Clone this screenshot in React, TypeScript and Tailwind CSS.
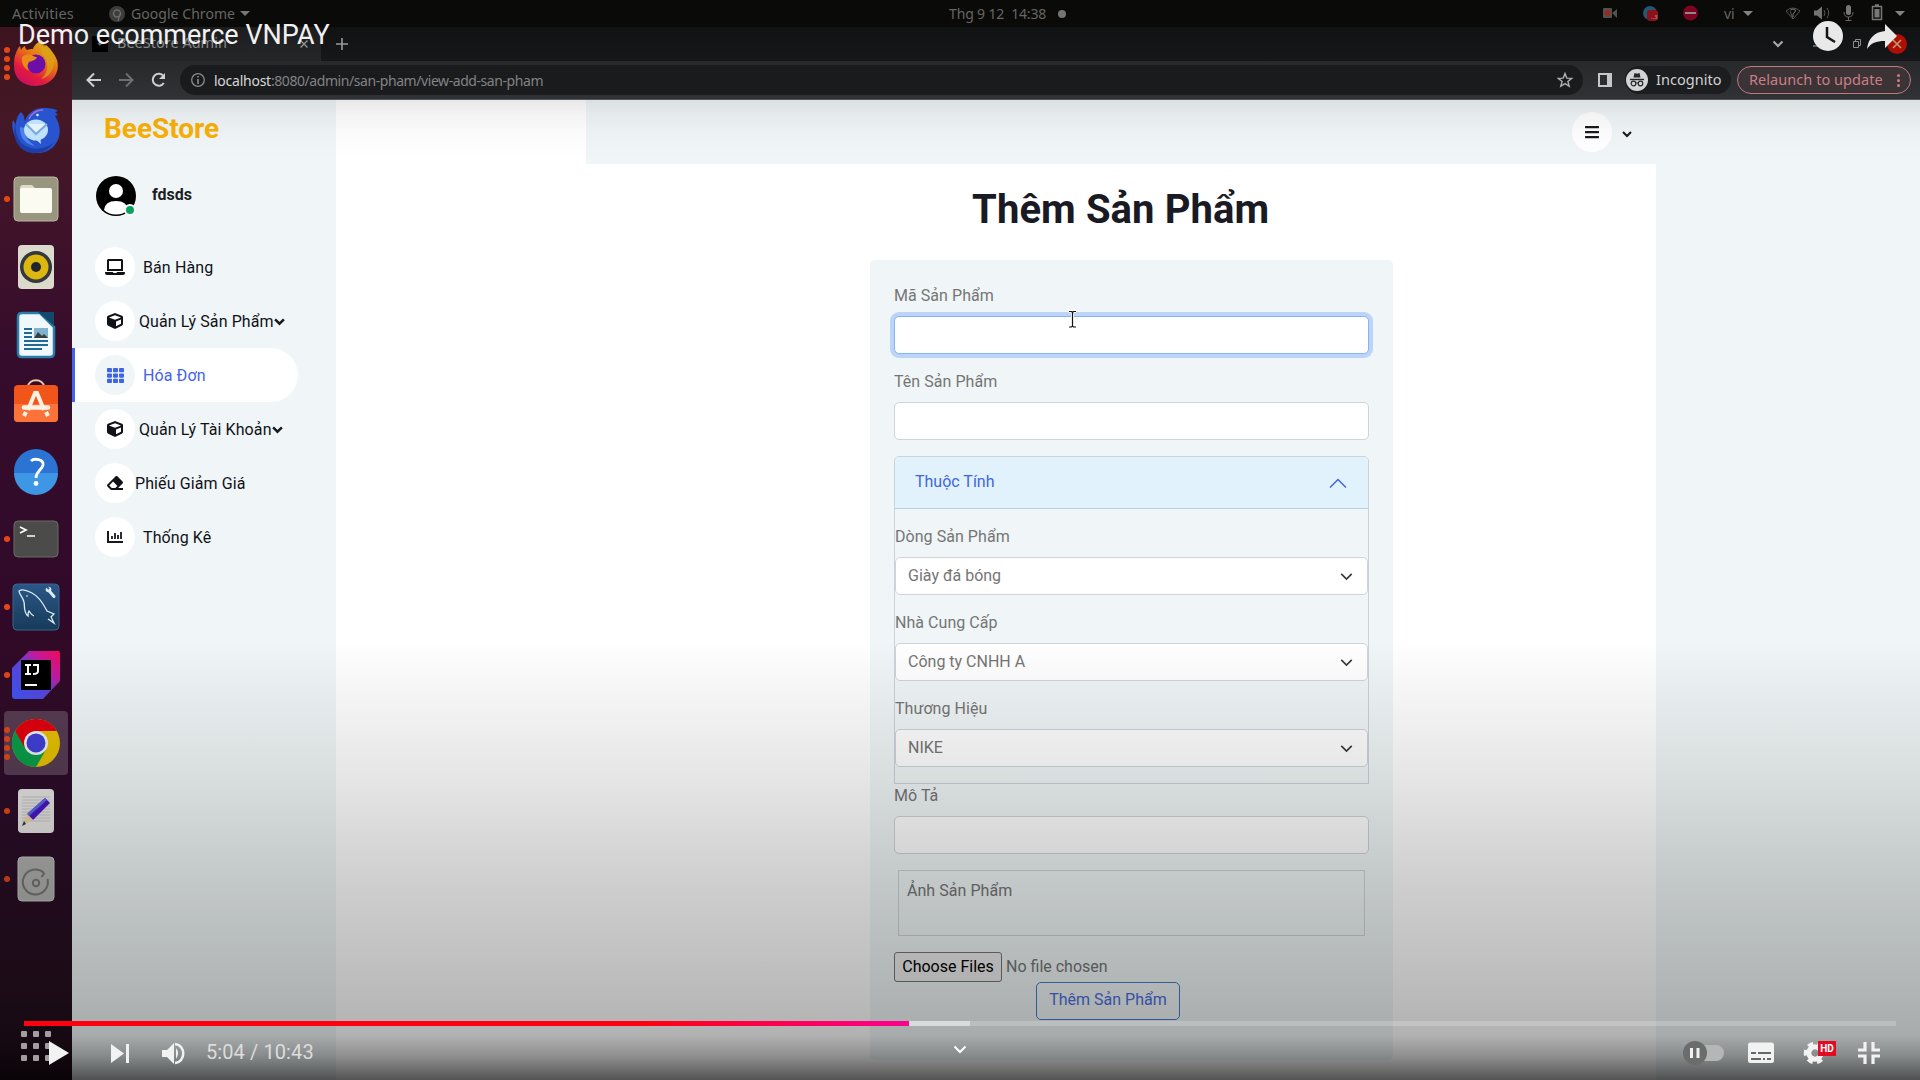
import React from "react";
import { FaLaptop, FaCube, FaTh, FaEraser, FaBars } from "react-icons/fa";

const ubuntu = "font-['Noto_Sans',sans-serif]";

function Dots({ n }: { n: number }) {
  return (
    <div className="absolute left-1 top-0 flex h-full w-[6px] flex-col justify-center gap-[3px]">
      {Array.from({ length: n }).map((_, i) => (
        <span key={i} className="h-[6px] w-[6px] rounded-full bg-[#e34716]" />
      ))}
    </div>
  );
}

const dock: { n: number; on?: boolean; art: React.ReactNode }[] = [
  {
    n: 4,
    art: (
      <>
        <defs>
          <linearGradient id="fx" x1="0.85" y1="0" x2="0.25" y2="1">
            <stop offset="0" stopColor="#d8c41c" />
            <stop offset=".4" stopColor="#e87a12" />
            <stop offset=".75" stopColor="#e3193f" />
            <stop offset="1" stopColor="#c70f63" />
          </linearGradient>
        </defs>
        <path d="M4 14c1-3 2-5 4-7l1 4c1-2 2-3 4-4 0 2 1 3 2 4 2-1 4-1 6-1 1-4 5-7 9-9-1 3 0 5 2 7l2-2c5 4 9 10 11 15 4 14-7 26-21 26C10 47 2 39 2 27c0-5 0-9 2-13z" fill="url(#fx)" />
        <circle cx="24" cy="25" r="9.500" fill="#6b0fa8" />
        <path d="M10 18c4-3 8-3 11-1 2 1 3 1 4 1-1 3-5 4-8 5-2 3-2 6 1 9-6-2-9-8-8-14z" fill="#ec8a17" />
        <path d="M29 3c4 3 11 8 14 18-2 14-9 18-14 19 6-5 8-12 5-19-2-4-7-9-5-18z" fill="#dca31a" opacity=".75" />
      </>
    ),
  },
  {
    n: 0,
    art: (
      <>
        <path d="M9 5c4 4 3 7 4 9C15 8 20 2 30 1c6 0 12 0 16 3l-3 1 3 3-3 1c6 9 7 21-1 30-9 10-25 9-33-1C1 30-1 19 1 13l3 5c0-6 2-10 5-13z" fill="#2855cf" />
        <path d="M4 15c-2 12 3 23 15 26 9 2 18-1 23-6-5 9-14 12-23 11C5 43-1 29 4 15z" fill="#1c3ea6" />
        <path d="M8 20c-1 10 6 18 15 19-7-5-11-11-10-18z" fill="#4c82ea" />
        <ellipse cx="24" cy="23" rx="12" ry="10.500" fill="#bfe1fb" />
        <path d="M14 17l10 10 11-10" stroke="#7aa9da" strokeWidth="2" fill="#e4f3fe" />
        <path d="M22 31l7 6-1-8z" fill="#bfe1fb" />
        <circle cx="25.500" cy="8" r="1.300" fill="#d9f4ff" />
        <path d="M17 12c3-6 8-9 14-9" stroke="#a06bd8" strokeWidth="1.500" fill="none" />
      </>
    ),
  },
  {
    n: 1,
    art: (
      <>
        <rect x="2" y="2" width="44" height="44" rx="4" fill="#98967f" stroke="#b9b7a3" />
        <path d="M8 13q0-3 3-3h9l3 3h13v8H8z" fill="#dddccb" />
        <rect x="8" y="13" width="32" height="25" rx="2" fill="#fbfbf1" />
      </>
    ),
  },
  {
    n: 0,
    art: (
      <>
        <rect x="6" y="2" width="36" height="44" rx="4" fill="#dcd9cd" />
        <circle cx="24" cy="24" r="16" fill="#34393d" />
        <circle cx="24" cy="24" r="12.500" fill="#dcb70f" />
        <circle cx="24" cy="24" r="5" fill="#22262a" />
      </>
    ),
  },
  {
    n: 0,
    art: (
      <>
        <path d="M10 2h18l14 14v26q0 4-4 4H10q-4 0-4-4V6q0-4 4-4z" fill="#f1f8fc" stroke="#2a7fa8" strokeWidth="2.500" />
        <path d="M26 1h16v14z" fill="#134a6b" />
        <path d="M12 18h8M12 22h8M12 26h8M12 30h24M12 34h24M12 38h18" stroke="#1f6b96" strokeWidth="1.800" />
        <rect x="22" y="17" width="14" height="10" fill="#7fb3d0" />
        <path d="M22 27l4-6 4 4 2-2 4 4z" fill="#36413b" />
      </>
    ),
  },
  {
    n: 0,
    art: (
      <>
        <path d="M16 8c0-9 16-9 16 0" fill="none" stroke="#e8cfa8" strokeWidth="2" />
        <rect x="2" y="6" width="44" height="37" rx="4" fill="#f2551a" />
        <path d="M2 25h44v14q0 4-4 4H6q-4 0-4-4z" fill="#fb7338" />
        <path d="M16 31L23 14h2l7 17M14 33l-2 4M34 33l2 4" stroke="#fdf1e4" strokeWidth="4" fill="none" />
        <path d="M12 28.500h24" stroke="#fdf1e4" strokeWidth="4.500" strokeLinecap="round" />
      </>
    ),
  },
  {
    n: 0,
    art: (
      <>
        <circle cx="24" cy="24" r="22" fill="#2c74d4" />
        <path d="M2 26a22 22 0 0 0 44 0z" fill="#3d97e4" />
        <path d="M19 14c3-3 13-2 12 4-1 5-7 6-7 13" stroke="#fff" strokeWidth="2.800" fill="none" />
        <circle cx="24" cy="36.500" r="2.400" fill="#fff" />
      </>
    ),
  },
  {
    n: 1,
    art: (
      <>
        <rect x="2" y="6" width="44" height="36" rx="4" fill="#4b4c4a" stroke="#6b6a68" />
        <path d="M8 12l6 3-6 3M15 21h8" stroke="#fff" strokeWidth="1.700" fill="none" />
      </>
    ),
  },
  {
    n: 1,
    art: (
      <>
        <defs>
          <linearGradient id="my" x1="0" y1="0" x2="0" y2="1">
            <stop offset="0" stopColor="#2b5688" />
            <stop offset="1" stopColor="#173b58" />
          </linearGradient>
        </defs>
        <rect x="1" y="1" width="46" height="46" rx="4" fill="url(#my)" stroke="#38648d" />
        <path d="M22 33c-3-1-4-4-5-5-1 1-1 3-1 5-5-4-3-10-4-14-1-5-5-8-5-11 4-3 9 0 13 2 8 4 12 12 15 18l7 3-3 3 3 6-6-4" fill="none" stroke="#dcecf4" strokeWidth="1.300" />
        <path d="M36 6.500l6 7" stroke="#dcecf4" strokeWidth="3" strokeLinecap="round" />
        <circle cx="36.500" cy="6.500" r="2.800" fill="#dcecf4" />
        <path d="M34 3l3 3" stroke="#2b5688" strokeWidth="2" />
        <circle cx="15" cy="13" r=".8" fill="#fff" />
      </>
    ),
  },
  {
    n: 1,
    art: (
      <>
        <defs>
          <linearGradient id="ij" x1="0" y1="1" x2="1" y2="0">
            <stop offset="0" stopColor="#3c55f5" />
            <stop offset=".45" stopColor="#5a45dd" />
            <stop offset=".7" stopColor="#c31aa0" />
            <stop offset="1" stopColor="#f5085a" />
          </linearGradient>
        </defs>
        <path d="M17 0h29q2 0 2 2v28L31 48H3q-3 0-3-3V17z" fill="url(#ij)" />
        <rect x="9" y="9" width="30" height="30" fill="#000" />
        <path d="M13 14h6M13 23h6M16 14v9M21 14h5v6q0 3-5 3" stroke="#fff" strokeWidth="2" fill="none" />
        <path d="M13 34h12" stroke="#fff" strokeWidth="2" />
      </>
    ),
  },
  {
    n: 4,
    on: true,
    art: (
      <>
        <circle cx="24" cy="24" r="24" fill="#e5c000" />
        <path d="M3.200 12A24 24 0 0 0 24 48L34.400 30 24 24z" fill="#0a9d48" />
        <path d="M3.200 12A24 24 0 0 1 44.800 12H24v12L13.600 30z" fill="#e3000f" />
        <circle cx="24" cy="24" r="12" fill="#eef0f3" />
        <circle cx="24" cy="24" r="9.500" fill="#4040d6" />
      </>
    ),
  },
  {
    n: 1,
    art: (
      <>
        <rect x="6" y="2" width="36" height="44" rx="4" fill="#e5e4e2" />
        <path d="M10 10h28M10 13h28M10 16h28M10 19h28M10 22h28M10 25h28M10 28h28M10 31h28M10 34h28" stroke="#c3c4c5" />
        <path d="M33 11l5 5-17 17-6-6z" fill="#4a16c4" />
        <path d="M33 11l-18 16 2 2 18-16z" fill="#5a6ae0" />
        <path d="M15 27l6 6-10 5z" fill="#ecd0a6" />
        <path d="M12 34l2 3-4 2z" fill="#333" />
      </>
    ),
  },
  {
    n: 1,
    art: (
      <>
        <rect x="6" y="2" width="36" height="44" rx="4" fill="#b0b0af" stroke="#c8c8c6" />
        <path d="M32 18A12.500 12.500 0 1 0 35.500 24" fill="none" stroke="#757573" strokeWidth="2" />
        <path d="M29.500 22l3-4" stroke="#757573" strokeWidth="2" />
        <circle cx="24" cy="28" r="3.200" fill="none" stroke="#757573" strokeWidth="2" />
      </>
    ),
  },
];

function Chev({ c = "#18181d", s = 10, w = 2 }: { c?: string; s?: number; w?: number }) {
  return (
    <svg width={s} height={s} viewBox="0 0 10 10" fill="none" className="shrink-0">
      <path d="M1 3l4 4 4-4" stroke={c} strokeWidth={w} />
    </svg>
  );
}

function Tri() {
  return <span className="h-0 w-0 border-x-[5px] border-t-[5px] border-x-transparent border-t-[#777]" />;
}

function TopBar() {
  return (
    <div className={`relative flex h-[27px] shrink-0 items-center bg-[#0a0a08] text-[14px] text-[#666664] ${ubuntu}`}>
      <span className="ml-3 w-[97px] text-[14.500px] tracking-[0.15px]">Activities</span>
      <svg width="16" height="16" viewBox="0 0 16 16">
        <circle cx="8" cy="8" r="8" fill="#3d3d3c" />
        <circle cx="8" cy="7.500" r="3.500" fill="none" stroke="#6c6c6a" strokeWidth="1.500" />
        <path d="M11 8l-2 7" stroke="#6c6c6a" strokeWidth="1.200" />
      </svg>
      <span className="ml-[6px] w-[109px] tracking-[0.05px]">Google Chrome</span>
      <Tri />
      <span className="ml-[699px] w-[109px] whitespace-pre tracking-[-0.15px]">{"Thg 9 12  14:38"}</span>
      <span className="h-2 w-2 rounded-full bg-[#757573]" />
      <svg className="absolute left-[1600px] top-0" width="320" height="27" viewBox="0 0 320 27">
        <rect x="3" y="8" width="9" height="10" rx="1" fill="#54504e" />
        <path d="M12 13l5-4v9z" fill="#54504e" />
        <circle cx="7.500" cy="13" r="2.800" fill="#a0251c" />
        <circle cx="50" cy="13" r="7" fill="#235773" />
        <rect x="47" y="10" width="11" height="11" rx="3" fill="#8c1119" />
        <circle cx="90.500" cy="13" r="7.500" fill="#7d0322" />
        <path d="M85 13h11" stroke="#8f8a8a" strokeWidth="2" />
        <path d="M143 11h10l-5 5zM295 11h10l-5 5z" fill="#848482" />
        <path d="M186 11q7-6 14 0l-7 8zM190 11l3 8" stroke="#555" fill="none" />
        <path d="M190.500 10q2.500-2 5 0 0 2-2.500 4v3" stroke="#777" fill="none" />
        <path d="M214 10.500h3l5-4v13l-5-4h-3z" fill="#747472" />
        <path d="M224 10q2 3 0 6M227 8q3.500 5 0 10" stroke="#555" fill="none" />
        <rect x="246" y="5" width="5" height="10" rx="2.500" fill="#777" />
        <path d="M244 12q0 5 4.500 5t4.500-5M248.500 17v4M245.500 20.500h6" stroke="#666" fill="none" />
        <path d="M272.500 6.500h9v13h-9zM275 5h4" stroke="#777" fill="none" strokeWidth="1.500" />
        <path d="M274.500 9h5v8.500h-5z" fill="#777" />
      </svg>
      <span className="absolute left-[1651px] top-[14px] w-3 text-[6px] leading-[6px] text-[#aaa]">..3</span>
      <span className="absolute left-[1724px]">vi</span>
    </div>
  );
}

function Tabs() {
  return (
    <div className={`relative flex h-[34px] shrink-0 items-center bg-[linear-gradient(#111213,#161719)] text-[14px] ${ubuntu}`}>
      <div className="flex h-full w-[249px] items-center rounded-tr-lg bg-[linear-gradient(#1b1c1e,#262729)]">
        <div className="ml-5 flex h-4 w-4 items-center justify-center bg-black text-[9px] text-[#666]">✦</div>
        <span className="-mt-[2px] ml-[9px] w-[182px] text-[14.500px] tracking-[0px] text-[#87888a]">BeeStore Admin</span>
        <svg width="10" height="10" viewBox="0 0 10 10">
          <path d="M1.500 1.500l7 7M8.500 1.500l-7 7" stroke="#97989a" strokeWidth="1.300" />
        </svg>
      </div>
      <svg className="ml-[15px]" width="12" height="12" viewBox="0 0 12 12">
        <path d="M6 0v12M0 6h12" stroke="#98999b" strokeWidth="1.600" />
      </svg>
      <svg className="absolute left-[1696px] top-0" width="152" height="34" viewBox="0 0 152 34">
        <path d="M5.500 14.500l4.500 4.500 4.500-4.500" stroke="#aaa" strokeWidth="2" fill="none" />
        <path d="M45 19h9" stroke="#aaa" />
        <path d="M85.500 14.500h5v6h-5zM87.500 14v-1.500h5v6h-1.500" stroke="#8d8e90" fill="none" />
        <circle cx="129" cy="17" r="10" fill="#b00d05" />
        <path d="M125 13l8 8M133 13l-8 8" stroke="#b89c70" strokeWidth="1.700" />
      </svg>
    </div>
  );
}

function Toolbar() {
  return (
    <div className={`flex h-[39px] shrink-0 items-center border-b border-[#56575a] bg-[linear-gradient(#28292b,#313235)] ${ubuntu}`}>
      <svg width="112" height="30" viewBox="0 0 112 30" fill="none" className="shrink-0">
        <path d="M29 15H16M22 8.500L15.500 15l6.500 6.500" stroke="#cfd0d1" strokeWidth="2" />
        <path d="M47 15h13M54 8.500l6.500 6.500-6.500 6.500" stroke="#6d6e70" strokeWidth="2" />
        <path d="M91.500 11a6 6 0 1 0 .3 7" stroke="#cfd0d1" strokeWidth="2" />
        <path d="M93 8v6h-6z" fill="#cfd0d1" />
      </svg>
      <div className="-ml-[4px] flex h-[30px] w-[1403px] shrink-0 items-center rounded-full bg-[#1a1b1d]">
        <svg className="ml-[11px]" width="14" height="14" viewBox="0 0 14 14" fill="none">
          <circle cx="7" cy="7" r="6.300" stroke="#8b8c8e" strokeWidth="1.300" />
          <path d="M7 6v5M7 3v1.600" stroke="#8b8c8e" strokeWidth="1.600" />
        </svg>
        <span className="ml-[9px] grow whitespace-nowrap text-[14px] tracking-[-0.43px] text-[#828385]">
          <span className="tracking-[-0.25px] text-[#d6d7d8]">localhost</span>:8080/admin/san-pham/view-add-san-pham
        </span>
        <svg className="mr-[10px]" width="16" height="16" viewBox="0 0 16 16">
          <path d="M8 1.500l1.800 4.600 4.900.3-3.800 3.100 1.300 4.800L8 11.600l-4.200 2.700 1.300-4.800L1.300 6.400l4.900-.3z" stroke="#b0b1b3" strokeWidth="1.400" fill="none" />
        </svg>
      </div>
      <svg className="ml-[15px] shrink-0" width="14" height="14" viewBox="0 0 14 14">
        <path d="M1 1h12v12H1z" fill="none" stroke="#c6c7c8" strokeWidth="2" />
        <path d="M9 1h4v12H9z" fill="#c6c7c8" />
      </svg>
      <div className="ml-[13px] flex h-[28px] w-[106px] shrink-0 items-center rounded-full bg-[#1c1d1f]">
        <svg className="ml-[1px]" width="22" height="22" viewBox="0 0 22 22">
          <circle cx="11" cy="11" r="11" fill="#d3d4d5" />
          <path d="M7.500 8.500l1-4.500 2.500.7L13.500 4l1 4.500z" fill="#26272a" />
          <path d="M4 10.500h14" stroke="#26272a" strokeWidth="1.400" />
          <circle cx="7.500" cy="14.500" r="2.300" fill="none" stroke="#26272a" strokeWidth="1.200" />
          <circle cx="14.500" cy="14.500" r="2.300" fill="none" stroke="#26272a" strokeWidth="1.200" />
          <path d="M10 14h2" stroke="#26272a" />
        </svg>
        <span className="ml-2 text-[14.500px] tracking-[0.05px] text-[#d0d1d2]">Incognito</span>
      </div>
      <div className="ml-[6px] flex h-[28px] w-[174px] shrink-0 items-center rounded-full border border-[#bb7b7f] bg-[#3b3336] text-[14.500px] text-[#cb7f85]">
        <span className="ml-[11px] w-[143px] whitespace-nowrap tracking-[0.05px]">Relaunch to update</span>
        <span className="flex w-3 flex-col items-center gap-[2px]">
          <i className="h-[3px] w-[3px] rounded-full bg-[#cb7f85]" />
          <i className="h-[3px] w-[3px] rounded-full bg-[#cb7f85]" />
          <i className="h-[3px] w-[3px] rounded-full bg-[#cb7f85]" />
        </span>
      </div>
    </div>
  );
}

const menu = [
  { t: "Bán Hàng", icon: <FaLaptop size={20} />, gap: "ml-2" },
  { t: "Quản Lý Sản Phẩm", icon: <FaCube size={16} />, gap: "ml-1", more: true },
  { t: "Hóa Đơn", icon: <FaTh size={17} />, gap: "ml-2", active: true },
  { t: "Quản Lý Tài Khoản", icon: <FaCube size={16} />, gap: "ml-1", more: true },
  { t: "Phiếu Giảm Giá", icon: <FaEraser size={16} />, gap: "ml-0" },
  { t: "Thống Kê", icon: <Bars />, gap: "ml-2" },
];

function Bars() {
  return (
    <svg width="16" height="14" viewBox="0 0 16 14">
      <path d="M1 1v11h15" fill="none" stroke="#18181d" strokeWidth="2" />
      <path d="M5 9V6M8 9V3M11 9V5M14 9V2" stroke="#18181d" strokeWidth="1.800" />
    </svg>
  );
}

function Sidebar() {
  return (
    <aside className="w-[264px] shrink-0 bg-[#f0f6f7]">
      <div className="ml-8 mt-[10px] h-[38px] text-[28px] font-bold leading-[38px] tracking-[-0.05px] text-[#fab005]">BeeStore</div>
      <div className="ml-6 mt-[28px] flex h-10">
        <div className="relative">
          <svg width="40" height="40" viewBox="0 0 40 40">
            <circle cx="20" cy="20" r="20" fill="#000" />
            <circle cx="20" cy="15" r="7" fill="#fff" />
            <path d="M8 34q1-9 12-9t12 9q-5 4.500-12 4.500T8 34z" fill="#fff" />
          </svg>
          <span className="absolute bottom-0 right-0 h-3 w-3 rounded-full border-2 border-white bg-[#0aa15f]" />
        </div>
        <span className="ml-4 mt-[7px] text-[16px] font-bold leading-6 text-[#1d1e24]">fdsds</span>
      </div>
      <nav className="mt-6 text-[16px] text-[#111217]">
        {menu.map((m) => (
          <div
            key={m.t}
            className={
              m.active
                ? "flex h-[54px] w-[226px] items-center rounded-r-full border-l-[3px] border-[#4263eb] bg-white pl-[20px] text-[#3f63ea]"
                : "flex h-[54px] w-[226px] items-center pl-[23px]"
            }
          >
            <div className={m.active ? "flex h-10 w-10 shrink-0 items-center justify-center rounded-full bg-[#f0f6f7]" : "flex h-10 w-10 shrink-0 items-center justify-center rounded-full bg-white"}>
              {m.icon}
            </div>
            <span className={`mt-[2px] whitespace-nowrap tracking-[0.1px] ${m.gap}`}>{m.t}</span>
            {m.more && <Chev s={11} w={2.2} />}
          </div>
        ))}
      </nav>
    </aside>
  );
}

function Label({ children }: { children: React.ReactNode }) {
  return <label className="block h-6 leading-6 tracking-[0.05px]">{children}</label>;
}

function Select({ label, value }: { label: string; value: string }) {
  return (
    <div className="pt-4">
      <Label>{label}</Label>
      <div className="mt-2 flex h-[38px] items-center justify-between rounded-[5px] border border-[#ced4da] bg-white pl-3 pr-[14px]">
        {value}
        <Chev c="#343a40" s={13} w={1.3} />
      </div>
    </div>
  );
}

function Form() {
  return (
    <form className="h-[800px] w-[523px] rounded-[5px] bg-[#f0f6f7] px-6 pt-[24px] text-[16px] text-[#757575]">
      <Label>Mã Sản Phẩm</Label>
      <input readOnly className="mt-2 block h-[38px] w-full rounded-[5px] border border-[#86b3f5] bg-white shadow-[0_0_0_4px_#bcd4f8]" />
      <div className="mt-4">
        <Label>Tên Sản Phẩm</Label>
      </div>
      <input readOnly className="mt-2 block h-[38px] w-full rounded-[5px] border border-[#ced4da] bg-white" />
      <section className="mt-4 h-[328px] rounded-t-[5px] border border-[#c9d3d8]">
        <div className="flex h-[52px] items-center justify-between rounded-t-[4px] border-b border-[#b7d0e0] bg-[#e1f2fc] pl-5 pr-[21px] text-[#3f66dc]">
          <span className="-mt-[2px]">Thuộc Tính</span>
          <svg width="18" height="12" viewBox="0 0 18 12" fill="none">
            <path d="M1 10.500l8-8 8 8" stroke="#3f66dc" strokeWidth="1.500" />
          </svg>
        </div>
        <Select label="Dòng Sản Phẩm" value="Giày đá bóng" />
        <Select label="Nhà Cung Cấp" value="Công ty CNHH A" />
        <Select label="Thương Hiệu" value="NIKE" />
      </section>
      <Label>Mô Tả</Label>
      <input readOnly className="mt-2 block h-[38px] w-full rounded-[5px] border border-[#ced4da] bg-white" />
      <div className="mx-1 mt-4 h-[66px] border border-[#ced4da] px-2 pt-2">
        <Label>Ảnh Sản Phẩm</Label>
      </div>
      <div className="mt-4 flex h-[30px] items-center">
        <span className="flex h-[30px] w-[108px] items-center justify-center rounded-[3px] border border-[#767676] bg-[#efefef] text-black">Choose Files</span>
        <span className="ml-1">No file chosen</span>
      </div>
      <button type="button" className="ml-[142px] block h-[38px] w-[144px] rounded-[5px] border border-[#3f7fd0] pb-[2px] text-[16px] text-[#4b6fe0]">
        Thêm Sản Phẩm
      </button>
    </form>
  );
}

function Page() {
  return (
    <div className="relative flex min-h-0 grow bg-white">
      <Sidebar />
      <main className="flex w-[1320px] flex-col">
        <header className="ml-[250px] flex h-[64px] items-center bg-[#f0f6f7] text-[#18181d]">
          <div className="ml-[986px] flex h-10 w-10 items-center justify-center rounded-full bg-white">
            <FaBars size={16} />
          </div>
          <div className="ml-[10px] mt-[3px]">
            <Chev />
          </div>
        </header>
        <h1 className="ml-[636px] mt-[19px] h-[54px] whitespace-nowrap text-[40px] font-bold leading-[54px] tracking-[0.1px] text-[#191a23]">Thêm Sản Phẩm</h1>
        <div className="ml-[534px] mt-[23px]">
          <Form />
        </div>
      </main>
      <div className="grow bg-[#f0f6f7]" />
      <div className="absolute inset-x-0 top-0 h-[60px] bg-[linear-gradient(rgba(0,0,0,0.09)_0px,rgba(0,0,0,0.045)_16px,rgba(0,0,0,0.015)_36px,rgba(0,0,0,0)_60px)]" />
    </div>
  );
}

function Player() {
  return (
    <div className="absolute inset-0 text-white">
      <div className="absolute inset-x-0 bottom-0 h-[440px] bg-[linear-gradient(to_bottom,rgba(0,0,0,0)_0px,rgba(0,0,0,0.03)_40px,rgba(0,0,0,0.1)_140px,rgba(0,0,0,0.19)_240px,rgba(0,0,0,0.26)_340px,rgba(0,0,0,0.3)_395px,rgba(0,0,0,0.43)_415px,rgba(0,0,0,0.67)_440px)]" />
      <div className="absolute left-[18px] top-[17px] whitespace-nowrap text-[27px] leading-9 text-[#f1f1f1]">Demo ecommerce VNPAY</div>
      <svg className="absolute left-[1810px] top-[16px]" width="90" height="40" viewBox="0 0 90 40">
        <circle cx="18" cy="20" r="15" fill="#e9e9e9" />
        <path d="M17 11v10l8 5" stroke="#151617" strokeWidth="2.500" fill="none" />
        <path d="M75 8l12 12-12 12v-7c-9 0-14 2-18 8 1-10 7-17 18-18z" fill="#e9e9e9" />
      </svg>
      <div className="absolute left-6 top-[1021px] flex h-[5px] w-[1872px] bg-white/20">
        <div className="w-[885px] bg-[linear-gradient(to_right,#ff0010_70%,#ff0090)]" />
        <div className="w-[61px] bg-white/45" />
      </div>
      <div className="absolute left-[21px] top-[1031px] grid grid-cols-3 gap-[6px]">
        {Array.from({ length: 9 }).map((_, i) => (
          <span key={i} className="h-[6px] w-[6px] rounded-[1px] bg-[#a39da0]" />
        ))}
      </div>
      <svg className="absolute left-[40px] top-[1032px]" width="160" height="42" viewBox="0 0 160 42" fill="#f2f2f2">
        <path d="M9 9l20 12L9 33z" />
        <path d="M71 12l13 9.500L71 31zM86 12h3v19h-3z" />
        <path d="M122 18h5l7-7v21l-7-7h-5z" />
        <path d="M136 16q4 5 0 11z" />
        <path d="M135 12c11 1 11 18 0 19" fill="none" stroke="#f2f2f2" strokeWidth="2.500" />
      </svg>
      <div className="absolute left-[206px] top-[1038px] whitespace-nowrap text-[20px] leading-7 tracking-[0.1px] text-[#dcdcdc]">5:04 / 10:43</div>
      <svg className="absolute left-[950px] top-[1040px]" width="20" height="20" viewBox="0 0 20 20">
        <path d="M4.500 6.500l5.500 5.500 5.500-5.500" stroke="#fff" strokeWidth="2" fill="none" />
      </svg>
      <svg className="absolute left-[1680px] top-[1034px]" width="210" height="38" viewBox="0 0 210 38">
        <rect x="10" y="11" width="34" height="16" rx="8" fill="#b5b6b6" />
        <circle cx="15" cy="19" r="12" fill="#6b6c6c" />
        <path d="M11.500 14v10M18 14v10" stroke="#f2f2f2" strokeWidth="3" />
        <rect x="68" y="8.500" width="26" height="20.500" rx="2.500" fill="#f2f2f2" />
        <path d="M71 19h5M78 19h13M71 25h10M83 25h2M87 25h4" stroke="#666767" strokeWidth="2.200" />
        <g transform="translate(135 19)" fill="none" stroke="#f2f2f2">
          <circle r="6.200" strokeWidth="5" />
          <circle r="9.500" strokeWidth="3.500" strokeDasharray="5.500 4.450" strokeDashoffset="2.700" />
        </g>
        <rect x="138" y="7" width="18" height="15" fill="#e30b22" />
        <path d="M178 16h7V8M200 16h-7V8M178 22h7v8M200 22h-7v8" stroke="#f2f2f2" strokeWidth="3.200" fill="none" />
      </svg>
      <span className="absolute left-[1820px] top-[1043px] w-[14px] text-center text-[10px] font-bold leading-[11px]">HD</span>
    </div>
  );
}

export default function App() {
  return (
    <div className="relative flex h-[1080px] w-[1920px] flex-col overflow-hidden bg-black font-[Roboto,sans-serif]">
      <TopBar />
      <div className="flex min-h-0 grow">
        <aside className="w-[72px] shrink-0 bg-[linear-gradient(#3d1320_0px,#441825_90px,#41132a_190px,#350c2c_330px,#310929_560px,#300a26_650px,#2c0c2a_760px,#25101f_960px,#1d0b18_1053px)] pt-[2px]">
          {dock.map((d, i) => (
            <div key={i} className="relative flex h-[68px] items-center justify-center">
              {d.on && <div className="absolute left-1 top-[2px] h-16 w-16 rounded bg-white/20" />}
              <Dots n={d.n} />
              <svg className="relative" width="48" height="48" viewBox="0 0 48 48">
                {d.art}
              </svg>
            </div>
          ))}
        </aside>
        <div className="flex w-[1848px] flex-col">
          <Tabs />
          <Toolbar />
          <Page />
        </div>
      </div>
      <Player />
      <svg className="absolute left-[1066px] top-[310px]" width="13" height="19" viewBox="0 0 13 19" fill="none">
        <path d="M3 1.500h2.500l1 1 1-1H10M6.500 2.500v14M3 17h2.500l1-1 1 1H10" stroke="#fff" strokeWidth="3" />
        <path d="M3 1.500h2.500l1 1 1-1H10M6.500 2.500v14M3 17h2.500l1-1 1 1H10" stroke="#111" strokeWidth="1.200" />
      </svg>
    </div>
  );
}
